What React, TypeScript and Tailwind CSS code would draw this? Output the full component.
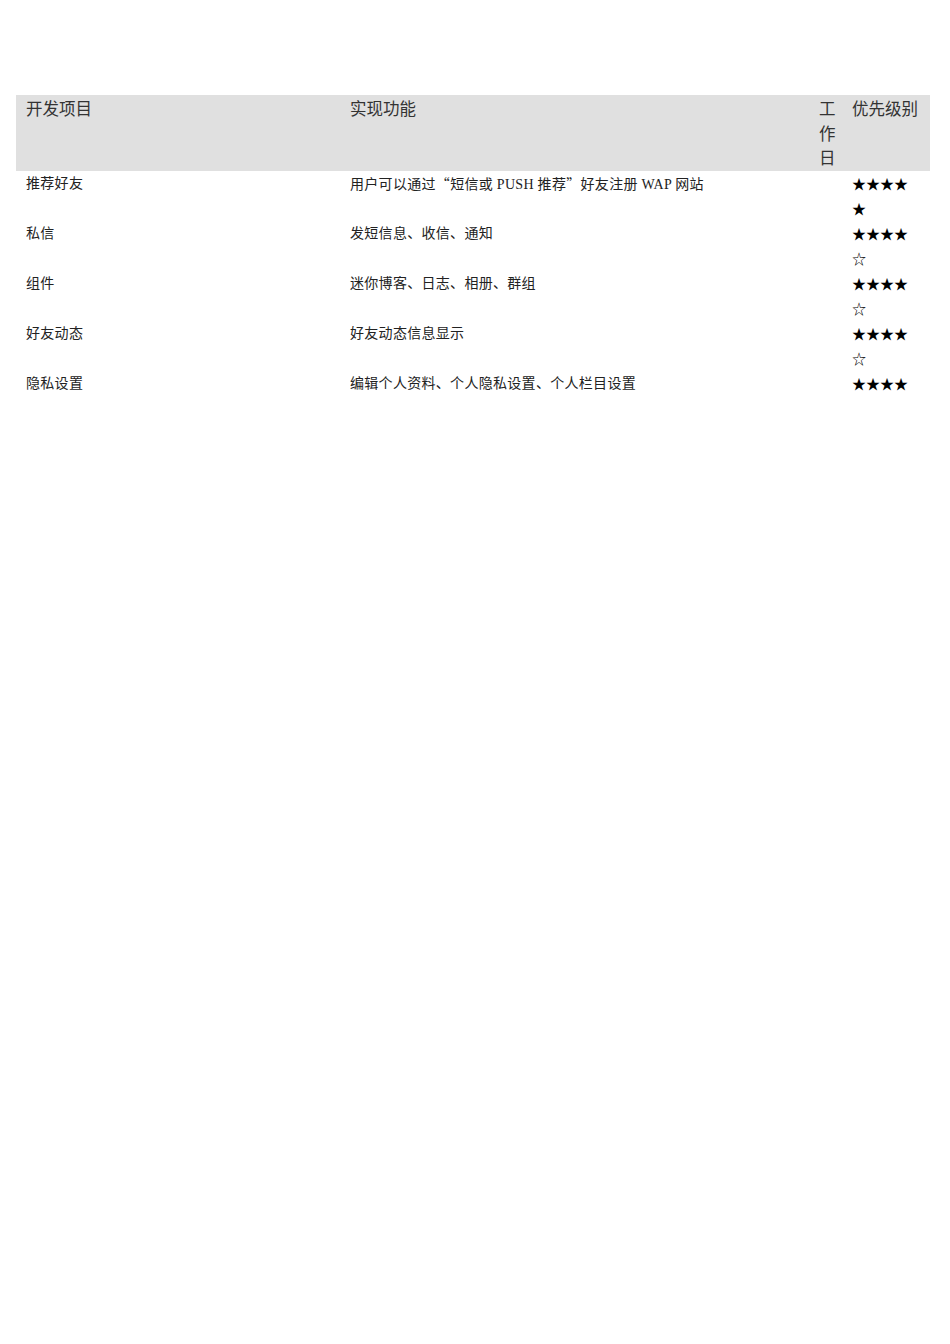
const rows = [
  { name: '推荐好友', desc: ['用户可以通过', '“', '短信或 PUSH 推荐', '”', '好友注册 WAP 网站'], stars: '★★★★★' },
  { name: '私信', desc: ['发短信息、收信、通知'], stars: '★★★★☆' },
  { name: '组件', desc: ['迷你博客、日志、相册、群组'], stars: '★★★★☆' },
  { name: '好友动态', desc: ['好友动态信息显示'], stars: '★★★★☆' },
  { name: '隐私设置', desc: ['编辑个人资料、个人隐私设置、个人栏目设置'], stars: '★★★★' },
]

export default function App() {
  return (
    <div className="min-h-[1344px] w-[950px] bg-white pt-[95px] pl-4 pr-5">
      <table className="w-[914px] table-fixed border-collapse">
        <colgroup>
          <col className="w-[324px]" />
          <col className="w-[469px]" />
          <col className="w-[33px]" />
          <col className="w-[88px]" />
        </colgroup>

        {/* ── Header ── */}
        <thead>
          <tr className="h-[75px] bg-[#e0e0e0] align-top text-[16.5px] leading-[24.5px] text-[#333] font-['Liberation_Sans','Noto_Sans_CJK_SC',sans-serif]">
            <th className="pl-[10px] pt-[2px] text-left font-normal">开发项目</th>
            <th className="pl-[10px] pt-[2px] text-left font-normal">实现功能</th>
            <th className="pl-[10px] pt-[2px] text-left font-normal break-all">工作日</th>
            <th className="pl-[10px] pt-[2px] text-left font-normal">优先级别</th>
          </tr>
        </thead>

        {/* ── Rows ── */}
        <tbody className="text-[14px] leading-[25px] tracking-[0.3px] text-[#222] font-['Liberation_Serif','Noto_Sans_CJK_SC',serif]">
          {rows.map(r => (
            <tr key={r.name} className="h-[50px] align-top">
              <td className="pl-[10px]">{r.name}</td>
              <td className="pl-[10px]">
                {r.desc.map((part, i) =>
                  part === '“' || part === '”'
                    ? <span key={i} className="font-['Noto_Sans_CJK_SC',sans-serif]">{part}</span>
                    : <span key={i}>{part}</span>,
                )}
              </td>
              <td className="pl-[10px]"></td>
              <td className="pl-[10px] pr-[10px] text-black tracking-normal font-['Noto_Sans_CJK_SC',sans-serif] break-all">
                {r.stars}
              </td>
            </tr>
          ))}
        </tbody>
      </table>
    </div>
  )
}
